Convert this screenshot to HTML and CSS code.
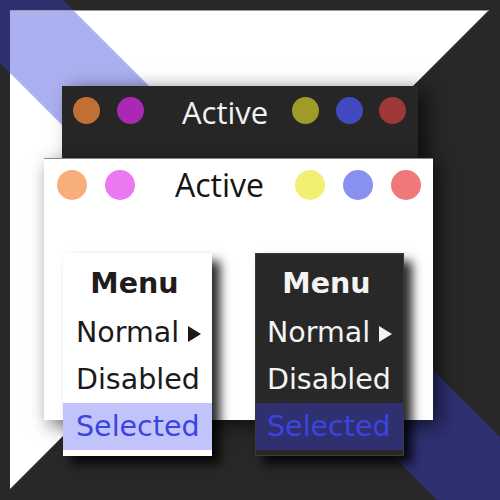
FILE: index.html
```html
<!DOCTYPE html>
<html>
<head>
<meta charset="utf-8">
<link rel="stylesheet" href="styles.css">
</head>
<body>
<div class="stage">
  <svg class="backdrop" width="500" height="500" viewBox="0 0 500 500">
    <rect x="0" y="0" width="500" height="500" fill="#282828"/>
    <polygon points="0,0 63,0 500,437 500,500 437,500 0,63" fill="#2e3070"/>
    <polygon points="10,10 489,10 10,489" fill="#ffffff"/>
    <polygon points="10,10 73,10 281,218 218,281 10,73" fill="#aab0f0"/>
    <line x1="10" y1="10.5" x2="489" y2="10.5" stroke="#9c9c9c" stroke-width="1"/>
  </svg>

  <div class="window window-dark">
    <span class="dot" style="background:#c07034"></span>
    <span class="dot" style="background:#ab28b4"></span>
    <span class="title">Active</span>
    <span class="dot" style="background:#a09a28"></span>
    <span class="dot" style="background:#4149c0"></span>
    <span class="dot" style="background:#9e3838"></span>
  </div>

  <div class="window window-light">
    <span class="dot" style="background:#f8ae7a"></span>
    <span class="dot" style="background:#ea78f0"></span>
    <span class="title">Active</span>
    <span class="dot" style="background:#f2f072"></span>
    <span class="dot" style="background:#8890f0"></span>
    <span class="dot" style="background:#f07878"></span>
  </div>

  <div class="menu menu-light">
    <div class="menu-title">Menu</div>
    <div class="menu-item">Normal<span class="arrow"></span></div>
    <div class="menu-item">Disabled</div>
    <div class="menu-item selected">Selected</div>
  </div>

  <div class="menu menu-dark">
    <div class="menu-title">Menu</div>
    <div class="menu-item">Normal<span class="arrow"></span></div>
    <div class="menu-item">Disabled</div>
    <div class="menu-item selected">Selected</div>
  </div>
</div>
</body>
</html>
```

FILE: styles.css
```css
html, body {
  margin: 0;
  padding: 0;
  background: #282828;
}

.stage {
  position: relative;
  width: 500px;
  height: 500px;
  overflow: hidden;
}

.backdrop {
  position: absolute;
  left: 0;
  top: 0;
  display: block;
}

.window {
  position: absolute;
  box-sizing: border-box;
  display: flex;
  align-items: flex-start;
  font-family: "Open Sans", "Noto Sans", sans-serif;
}

.window-dark {
  left: 62px;
  top: 86px;
  width: 356px;
  height: 82px;
  background: #262626;
  padding: 11px 10px 0 11px;
  box-shadow: 10px 4px 18px rgba(0, 0, 0, 0.6);
}

.window-dark .dot {
  width: 27px;
  height: 27px;
  margin-right: 16.5px;
}

.window-dark .dot:last-child {
  margin-right: 0;
}

.window-dark .title {
  color: #f2f2f2;
  font-size: 31px;
  line-height: 42px;
  margin: -6px 24px 0 22px;
}

.window-light {
  left: 44px;
  top: 158px;
  width: 389px;
  height: 262px;
  background: #ffffff;
  border-top: 1px solid #8a8a8a;
  padding: 11px 11px 0 13px;
  box-shadow: 6px 6px 18px rgba(0, 0, 0, 0.6);
}

.window-light .dot {
  width: 30px;
  height: 30px;
  margin-right: 18px;
}

.window-light .dot:last-child {
  margin-right: 0;
}

.window-light .title {
  color: #141414;
  font-size: 32px;
  line-height: 44px;
  margin: -7px 31px 0 22px;
}

.dot {
  display: block;
  flex: none;
  border-radius: 50%;
}

.menu {
  position: absolute;
  top: 253px;
  width: 149px;
  height: 203px;
  box-sizing: border-box;
  padding: 6px 0;
  font-family: "DejaVu Sans", "Liberation Sans", sans-serif;
  font-size: 28.5px;
  box-shadow: 8px 8px 10px rgba(0, 0, 0, 0.85);
}

.menu-light {
  left: 63px;
  background: #ffffff;
  color: #1a1a1a;
}

.menu-dark {
  left: 255px;
  background: #282828;
  color: #f4f4f4;
  border: 1px solid #3a3a3a;
  padding: 5px 0;
}

.menu-title {
  height: 50px;
  line-height: 50px;
  font-weight: bold;
  text-align: center;
  padding-right: 6px;
}

.menu-light .menu-title {
  color: #211c1c;
}

.menu-item {
  display: flex;
  align-items: center;
  height: 47px;
  line-height: 47px;
  padding-left: 13px;
  white-space: nowrap;
}

.menu-dark .menu-item {
  padding-left: 11px;
}

.arrow {
  display: block;
  flex: none;
  width: 0;
  height: 0;
  margin-left: 9px;
  margin-top: 2px;
  border-top: 8px solid transparent;
  border-bottom: 8px solid transparent;
  border-left: 13px solid currentColor;
}

.menu-light .selected {
  background: #c0c4fa;
  color: #3c44e0;
}

.menu-dark .selected {
  background: #2e3070;
  color: #3c44e0;
}
```
